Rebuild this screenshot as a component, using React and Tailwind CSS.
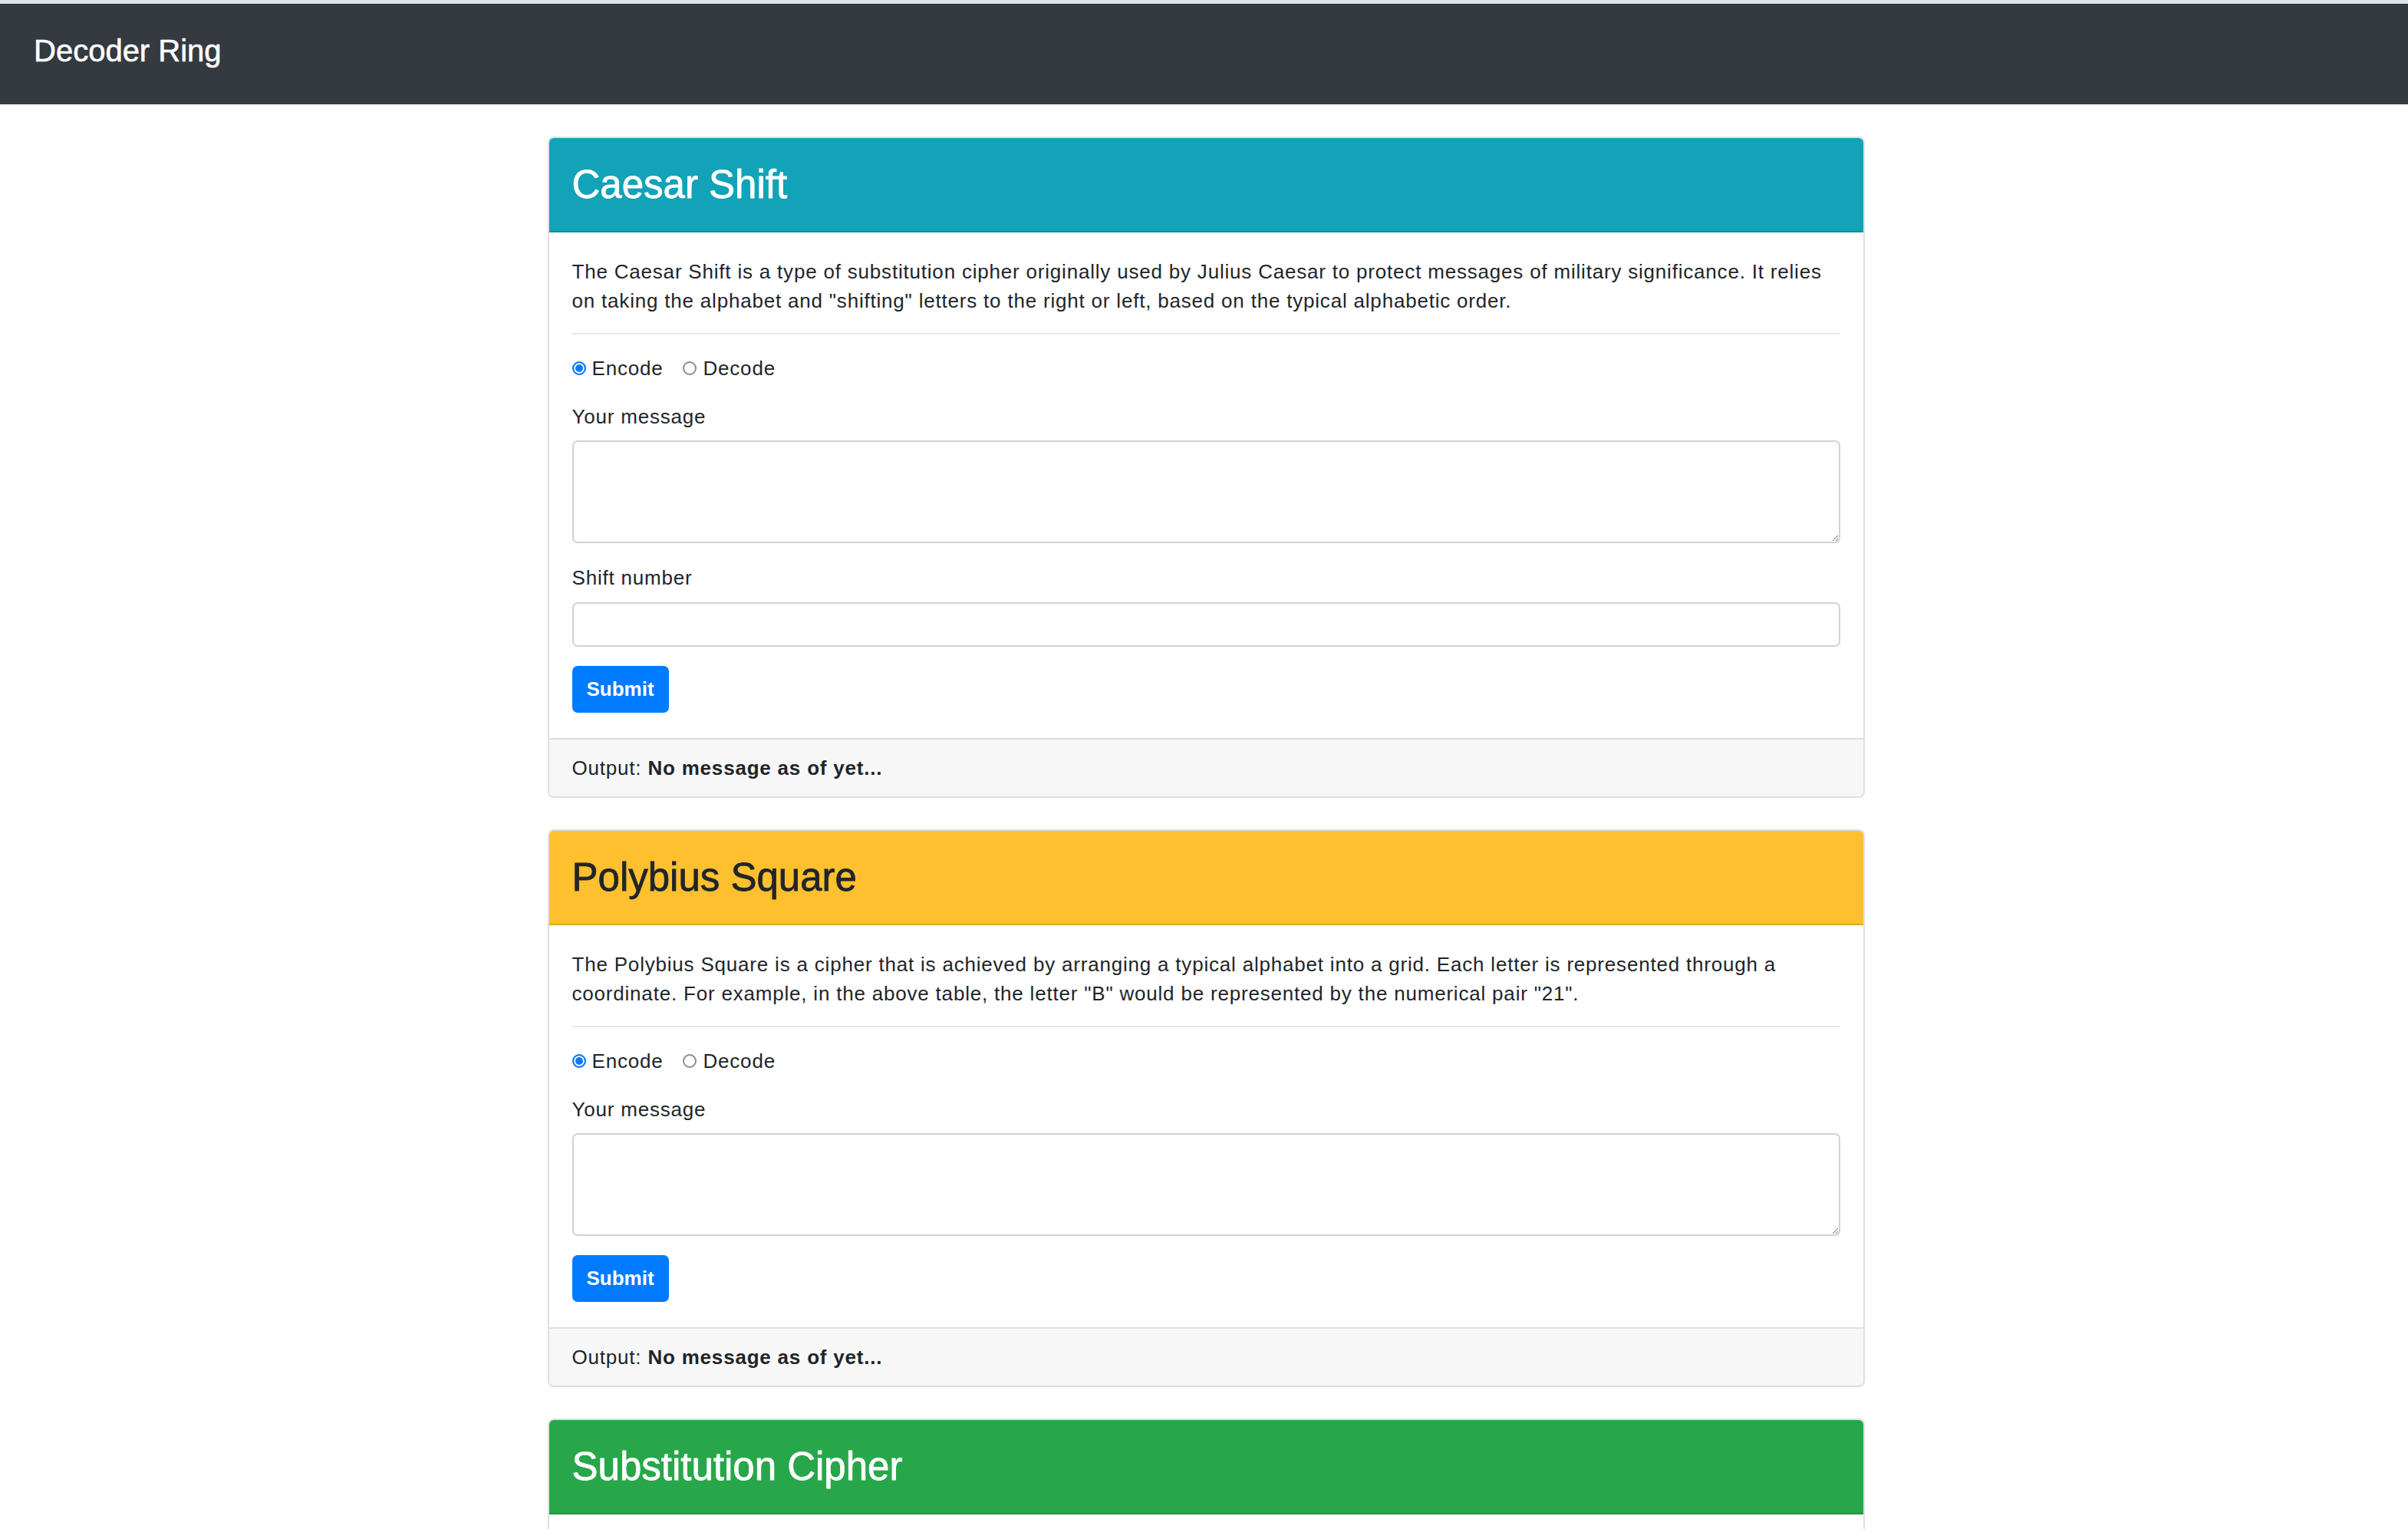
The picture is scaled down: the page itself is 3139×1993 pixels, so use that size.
import { useState } from 'react';

const ALPHABET = 'abcdefghijklmnopqrstuvwxyz';

// Cipher definitions shown as cards
const ciphers = [
  {
    id: 'caesar',
    title: 'Caesar Shift',
    headerClass: 'bg-[#12a3b8] text-white',
    description:
      'The Caesar Shift is a type of substitution cipher originally used by Julius Caesar to protect messages of military significance. It relies on taking the alphabet and "shifting" letters to the right or left, based on the typical alphabetic order.',
    extra: { label: 'Shift number', type: 'number' }
  },
  {
    id: 'polybius',
    title: 'Polybius Square',
    headerClass: 'bg-[#fec02e] text-[#212529]',
    description:
      'The Polybius Square is a cipher that is achieved by arranging a typical alphabet into a grid. Each letter is represented through a coordinate. For example, in the above table, the letter "B" would be represented by the numerical pair "21".'
  },
  {
    id: 'substitution',
    title: 'Substitution Cipher',
    headerClass: 'bg-[#27a74a] text-white',
    description:
      'The Substitution Cipher requires a standard alphabet and a substitution alphabet. Letters from the standard alphabet will be transposed to the substitution alphabet. This cipher requires that the recipient have the substitution alphabet, otherwise it will be difficult for them to decode the message.',
    extra: { label: 'Substitution alphabet', type: 'text' }
  }
];

function caesar(input, shift, encode) {
  const n = (Number(shift) || 0) * (encode ? 1 : -1);
  return input.toLowerCase().replace(/[a-z]/g, (c) => ALPHABET[(((ALPHABET.indexOf(c) + n) % 26) + 26) % 26]);
}

function polybius(input, encode) {
  const grid = 'abcdefghiklmnopqrstuvwxyz';
  if (encode) {
    return input.toLowerCase().replace(/[a-z]/g, (c) => {
      const i = grid.indexOf(c === 'j' ? 'i' : c);
      return `${(i % 5) + 1}${Math.floor(i / 5) + 1}`;
    });
  }
  return input.replace(/\d\d/g, (p) => grid[(Number(p[1]) - 1) * 5 + Number(p[0]) - 1] || '');
}

function substitution(input, key, encode) {
  if (!key || key.length !== 26) return false;
  const from = encode ? ALPHABET : key;
  const to = encode ? key : ALPHABET;
  return input.toLowerCase().split('').map((c) => (from.includes(c) ? to[from.indexOf(c)] : c)).join('');
}

function CipherCard({ cipher }) {
  const [mode, setMode] = useState('encode');
  const [message, setMessage] = useState('');
  const [extra, setExtra] = useState('');
  const [output, setOutput] = useState('');

  const handleSubmit = (e) => {
    e.preventDefault();
    const encode = mode === 'encode';
    let result;
    if (cipher.id === 'caesar') result = caesar(message, extra, encode);
    else if (cipher.id === 'polybius') result = polybius(message, encode);
    else result = substitution(message, extra, encode);
    setOutput(result === false ? 'Invalid alphabet' : result);
  };

  return (
    <div className="w-[1717px] mx-auto border-2 border-[#dfdfdf] rounded-[8px] overflow-hidden bg-white">
      {/* Header */}
      <div className={`px-[30px] py-[30px] border-b-2 border-[rgba(0,0,0,0.125)] ${cipher.headerClass}`}>
        <h2 className="text-[51px] leading-[61px] [-webkit-text-stroke:0.8px_currentColor]">{cipher.title}</h2>
      </div>

      {/* Body */}
      <form onSubmit={handleSubmit} className="px-[30px] pt-[32px] pb-[33px] tracking-[0.8px]">
        <p className="text-[26px] leading-[38px]">{cipher.description}</p>
        <hr className="mt-[23px] mb-[25px] border-t-2 border-[#e6e6e6]" />

        <div className="flex items-center h-[38px] text-[26px]">
          {['encode', 'decode'].map((m) => (
            <label key={m} className="flex items-center mr-[26px]">
              <input
                type="radio"
                name={`${cipher.id}-mode`}
                checked={mode === m}
                onChange={() => setMode(m)}
                className="appearance-none w-[18px] h-[18px] m-0 rounded-full border-2 border-[#8c8c8c] bg-white checked:border-[#0a7aff] checked:bg-[#0a7aff] checked:shadow-[inset_0_0_0_2px_#fff]"
              />
              <span className="ml-[8px]">{m === 'encode' ? 'Encode' : 'Decode'}</span>
            </label>
          ))}
        </div>

        <label className="block mt-[25px] text-[26px] leading-[38px]">Your message</label>
        <textarea
          value={message}
          onChange={(e) => setMessage(e.target.value)}
          className="block w-full mt-[12px] h-[134px] px-[24px] py-[12px] text-[26px] border-2 border-[#ced4da] rounded-[7px] resize-y outline-none"
        />

        {cipher.extra && (
          <>
            <label className="block mt-[26px] text-[26px] leading-[38px]">{cipher.extra.label}</label>
            <input
              type={cipher.extra.type}
              value={extra}
              onChange={(e) => setExtra(e.target.value)}
              className="block w-full mt-[13px] h-[58px] px-[24px] text-[26px] border-2 border-[#ced4da] rounded-[7px] outline-none"
            />
          </>
        )}

        <button
          type="submit"
          className="mt-[25px] h-[61px] px-[19px] bg-[#007bff] text-white text-[26px] font-bold tracking-normal rounded-[7px]"
        >
          Submit
        </button>
      </form>

      {/* Output */}
      <div className="px-[30px] py-[18px] bg-[#f7f7f7] border-t-2 border-[#dfdfdf] text-[26px] leading-[38px] tracking-[0.8px]">
        Output: <span className="font-bold">{output || 'No message as of yet...'}</span>
      </div>
    </div>
  );
}

export default function App() {
  return (
    <div className="min-h-screen bg-white text-[#212529] font-['Liberation_Sans',Arial,sans-serif]">
      <div className="h-[5px] bg-[#dfe2e6]" />
      <nav className="h-[131px] pl-[44px] pt-[30px] bg-[#343a40] border-t border-[#1d2124]">
        <span className="text-[40px] leading-[60px] text-white [-webkit-text-stroke:0.6px_currentColor]">Decoder Ring</span>
      </nav>

      <main className="pt-[42px] pb-[40px] pl-[5px] flex flex-col gap-[41px]">
        {ciphers.map((cipher) => (
          <CipherCard key={cipher.id} cipher={cipher} />
        ))}
      </main>
    </div>
  );
}
